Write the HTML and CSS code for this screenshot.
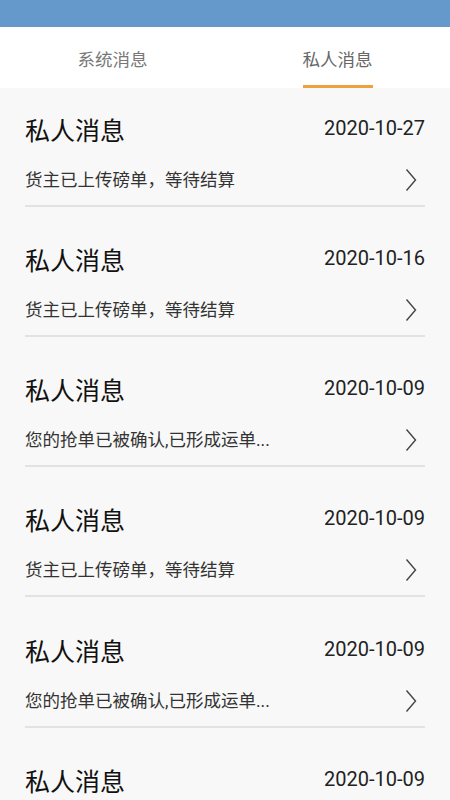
FILE: index.html
```html
<!DOCTYPE html>
<html lang="zh-CN">
<head>
  <meta charset="UTF-8" />
  <meta name="viewport" content="width=device-width, initial-scale=1.0"/>
  <title>消息</title>
  <link rel="stylesheet" href="styles.css">
</head>
<body>
  <div class="status-bar"></div>

  <div class="tabs">
    <div class="tab"><span class="tab-label">系统消息</span></div>
    <div class="tab active"><span class="tab-label">私人消息</span></div>
  </div>

  <div class="msg-list">
    <div class="msg-item">
      <div class="msg-head">
        <span class="msg-title">私人消息</span>
        <span class="msg-date">2020-10-27</span>
      </div>
      <div class="msg-body">
        <span class="msg-text">货主已上传磅单，等待结算</span>
        <svg class="chevron" width="12" height="24" viewBox="0 0 12 24"><path d="M1.5 1.5 L10.5 12 L1.5 22.5" fill="none" stroke="#444" stroke-width="1.4"/></svg>
      </div>
    </div>

    <div class="msg-item">
      <div class="msg-head">
        <span class="msg-title">私人消息</span>
        <span class="msg-date">2020-10-16</span>
      </div>
      <div class="msg-body">
        <span class="msg-text">货主已上传磅单，等待结算</span>
        <svg class="chevron" width="12" height="24" viewBox="0 0 12 24"><path d="M1.5 1.5 L10.5 12 L1.5 22.5" fill="none" stroke="#444" stroke-width="1.4"/></svg>
      </div>
    </div>

    <div class="msg-item">
      <div class="msg-head">
        <span class="msg-title">私人消息</span>
        <span class="msg-date">2020-10-09</span>
      </div>
      <div class="msg-body">
        <span class="msg-text">您的抢单已被确认,已形成运单...</span>
        <svg class="chevron" width="12" height="24" viewBox="0 0 12 24"><path d="M1.5 1.5 L10.5 12 L1.5 22.5" fill="none" stroke="#444" stroke-width="1.4"/></svg>
      </div>
    </div>

    <div class="msg-item">
      <div class="msg-head">
        <span class="msg-title">私人消息</span>
        <span class="msg-date">2020-10-09</span>
      </div>
      <div class="msg-body">
        <span class="msg-text">货主已上传磅单，等待结算</span>
        <svg class="chevron" width="12" height="24" viewBox="0 0 12 24"><path d="M1.5 1.5 L10.5 12 L1.5 22.5" fill="none" stroke="#444" stroke-width="1.4"/></svg>
      </div>
    </div>

    <div class="msg-item">
      <div class="msg-head">
        <span class="msg-title">私人消息</span>
        <span class="msg-date">2020-10-09</span>
      </div>
      <div class="msg-body">
        <span class="msg-text">您的抢单已被确认,已形成运单...</span>
        <svg class="chevron" width="12" height="24" viewBox="0 0 12 24"><path d="M1.5 1.5 L10.5 12 L1.5 22.5" fill="none" stroke="#444" stroke-width="1.4"/></svg>
      </div>
    </div>

    <div class="msg-item">
      <div class="msg-head">
        <span class="msg-title">私人消息</span>
        <span class="msg-date">2020-10-09</span>
      </div>
      <div class="msg-body">
        <span class="msg-text">货主已上传磅单，等待结算</span>
        <svg class="chevron" width="12" height="24" viewBox="0 0 12 24"><path d="M1.5 1.5 L10.5 12 L1.5 22.5" fill="none" stroke="#444" stroke-width="1.4"/></svg>
      </div>
    </div>
  </div>
</body>
</html>
```

FILE: styles.css
```css
:root {
  --blue: #6699cb;
  --orange: #f0a03c;
  --bg: #f8f8f8;
  --line: #e2e2e2;
}

body {
  margin: 0;
  padding: 0;
  background: var(--bg);
  font-family: Roboto, "Noto Sans CJK SC", sans-serif;
  color: #111;
}

.status-bar {
  height: 27px;
  background: var(--blue);
}

/* tab strip */
.tabs {
  display: flex;
  height: 61px;
  background: #fff;
}

.tab {
  flex: 1;
  display: flex;
  justify-content: center;
}

.tab-label {
  display: flex;
  align-items: center;
  padding-top: 4px;
  border-bottom: 3px solid transparent;
  font-size: 17.5px;
  color: #777;
}

.tab.active .tab-label {
  border-bottom-color: var(--orange);
  color: #666;
}

/* message list */
.msg-list {
  display: flex;
  flex-direction: column;
  gap: 11.75px;
}

.msg-item {
  margin: 0 25px;
  padding: 29.5px 0 13px;
  border-bottom: 2px solid var(--line);
}

.msg-head {
  display: flex;
  justify-content: space-between;
  align-items: flex-start;
}

.msg-title {
  font-size: 25px;
  line-height: 27px;
  color: #111;
}

.msg-date {
  font-size: 20px;
  line-height: 20px;
  color: #222;
}

.msg-body {
  display: flex;
  justify-content: space-between;
  align-items: center;
  height: 24px;
  margin-top: 23px;
}

.msg-text {
  font-size: 17.5px;
  line-height: 24px;
  color: #333;
}

.chevron {
  margin-right: 8px;
}
```
